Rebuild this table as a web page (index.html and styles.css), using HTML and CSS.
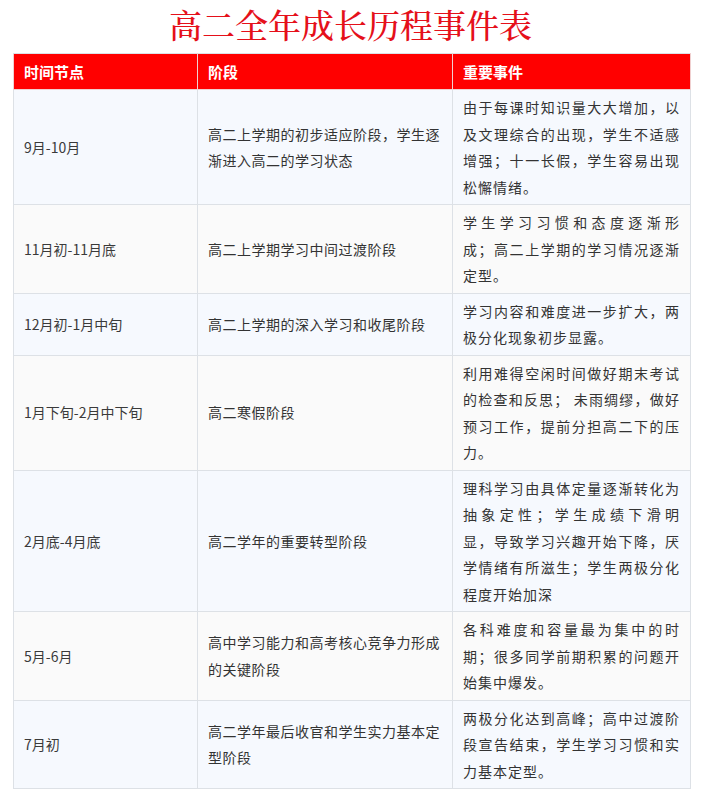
FILE: index.html
```html
<!DOCTYPE html>
<html lang="zh-CN">
<head>
<meta charset="utf-8">
<title>高二全年成长历程事件表</title>
<link rel="stylesheet" href="styles.css">
</head>
<body>
<div class="page">
  <h1 class="title">高二全年成长历程事件表</h1>
  <table class="events">
    <colgroup>
      <col class="c1"><col class="c2"><col class="c3">
    </colgroup>
    <thead>
      <tr><th>时间节点</th><th>阶段</th><th>重要事件</th></tr>
    </thead>
    <tbody>
      <tr class="odd">
        <td class="time">9月-10月</td>
        <td class="stage">高二上学期的初步适应阶段，学生逐渐进入高二的学习状态</td>
        <td class="ev">由于每课时知识量大大增加，以及文理综合的出现，学生不适感增强；十一长假，学生容易出现松懈情绪。</td>
      </tr>
      <tr class="even">
        <td class="time">11月初-11月底</td>
        <td class="stage">高二上学期学习中间过渡阶段</td>
        <td class="ev"><span class="jl">学生学习习惯和态度逐渐形</span>成；高二上学期的学习情况逐渐定型。</td>
      </tr>
      <tr class="odd">
        <td class="time">12月初-1月中旬</td>
        <td class="stage">高二上学期的深入学习和收尾阶段</td>
        <td class="ev">学习内容和难度进一步扩大，两极分化现象初步显露。</td>
      </tr>
      <tr class="even">
        <td class="time">1月下旬-2月中下旬</td>
        <td class="stage">高二寒假阶段</td>
        <td class="ev">利用难得空闲时间做好期末考试的检查和反思； 未雨绸缪，做好预习工作，提前分担高二下的压力。</td>
      </tr>
      <tr class="odd">
        <td class="time">2月底-4月底</td>
        <td class="stage">高二学年的重要转型阶段</td>
        <td class="ev"><span class="jl">理科学习由具体定量逐渐转化为</span><span class="jl">抽象定性；学生成绩下滑明</span>显，导致学习兴趣开始下降，厌学情绪有所滋生；学生两极分化程度开始加深</td>
      </tr>
      <tr class="even">
        <td class="time">5月-6月</td>
        <td class="stage">高中学习能力和高考核心竞争力形成的关键阶段</td>
        <td class="ev">各科难度和容量最为集中的时期；很多同学前期积累的问题开始集中爆发。</td>
      </tr>
      <tr class="odd">
        <td class="time">7月初</td>
        <td class="stage">高二学年最后收官和学生实力基本定型阶段</td>
        <td class="ev">两极分化达到高峰；高中过渡阶段宣告结束，学生学习习惯和实力基本定型。</td>
      </tr>
    </tbody>
  </table>
</div>
</body>
</html>
```

FILE: styles.css
```css
html, body {
  margin: 0;
  padding: 0;
  background: #ffffff;
}

.page {
  padding: 0 11px 0 13px;
  font-family: "Noto Sans CJK SC", "Noto Sans", sans-serif;
  color: #333333;
}

.title {
  margin: 0 -11px 5px -13px;
  font-family: "Noto Serif CJK SC", "Noto Sans CJK SC", serif;
  font-size: 33px;
  line-height: 48px;
  font-weight: 500;
  text-align: center;
  color: #e5101a;
}

.events {
  width: 677px;
  border-collapse: collapse;
  table-layout: fixed;
  border: 1px solid #dde1e6;
}

.c1 { width: 184px; }
.c2 { width: 255px; }
.c3 { width: 238px; }

.events th {
  background: #ff0000;
  color: #ffffff;
  font-size: 15px;
  font-weight: bold;
  text-align: left;
  line-height: 27px;
  padding: 4px 10px 4px 10px;
  border: 1px solid #f0d0d0;
  border-top-color: #dde1e6;
}

.events td {
  border: 1px solid #dde1e6;
  font-size: 14px;
  line-height: 26.5px;
  padding: 4px 10px 4px 10px;
  vertical-align: middle;
  word-break: break-all;
}

.odd td { background: #f6f9fe; }
.even td { background: #fafafa; }

.time {
  color: #3a3a3a;
}

.stage {
  letter-spacing: 0.5px;
}

.ev {
  letter-spacing: 1px;
  text-align: justify;
}

.jl {
  display: block;
  text-align: justify;
  text-align-last: justify;
}
```
